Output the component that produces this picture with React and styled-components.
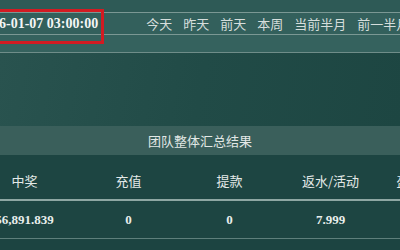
import React from "react";
import styled, { createGlobalStyle } from "styled-components";

const Global = createGlobalStyle`
  html, body { margin: 0; padding: 0; }
  body {
    width: 400px; height: 250px; overflow: hidden;
    background: #1c4441;
    font-family: "Noto Sans CJK SC", "Noto Sans", sans-serif;
  }
`;

const Page = styled.div`
  width: 400px;
  height: 250px;
  overflow: hidden;
  display: flex;
  flex-direction: column;
  background: #1c4441;
`;

const TopBand = styled.div`
  height: 12px;
  background: #2e5a56;
`;

const Rule = styled.div`
  height: ${(p) => p.$h || 1}px;
  background: ${(p) => p.$c || "#7b9894"};
  flex-shrink: 0;
`;

const FilterRow = styled.div`
  height: 21px;
  background: #33605c;
  display: flex;
  align-items: center;
  margin-left: -32px;
  white-space: nowrap;
`;

const DateCell = styled.div`
  position: relative;
  padding: 0 6px 0 10px;
  flex-shrink: 0;
  font-family: "Liberation Serif", serif;
  font-weight: bold;
  font-size: 14px;
  color: #f4f6f5;
`;

const RedMark = styled.div`
  position: absolute;
  top: -7px;
  bottom: -12px;
  left: 0;
  right: 0;
  border: 3px solid #d21b22;
  pointer-events: none;
`;

const NavList = styled.div`
  display: flex;
  gap: 11px;
  margin-left: 42px;
`;

const NavItem = styled.span`
  font-size: 13px;
  color: #d6dedc;
`;

const SubBand = styled.div`
  height: 17px;
  background: #35625e;
`;

const Spacer = styled.div`
  height: 73px;
  background: linear-gradient(100deg, #29534f 0%, #214b47 50%, #1d4642 100%);
`;

const SummaryTitle = styled.div`
  height: 29px;
  background: #3a5f5b;
  display: flex;
  align-items: center;
  justify-content: center;
  font-size: 13px;
  color: #e2e8e6;
`;

const Row = styled.div`
  height: ${(p) => p.$h}px;
  background: #1d4542;
  display: grid;
  grid-template-columns: 107px 101px 101px 101px 101px;
  margin-left: -29px;
  align-items: center;
  padding-top: ${(p) => p.$pt || 0}px;
  box-sizing: border-box;
`;

const HeadCell = styled.div`
  text-align: center;
  font-size: 13px;
  color: #e4eae8;
  white-space: nowrap;
`;

const ValueCell = styled.div`
  text-align: center;
  font-family: "Liberation Serif", serif;
  font-weight: bold;
  font-size: 13px;
  color: #e8eeec;
  white-space: nowrap;
`;

const heads = ["中奖", "充值", "提款", "返水/活动", "盈利/亏损额"];
const values = ["56,891.839", "0", "0", "7.999", "48,892.840"];
const nav = ["今天", "昨天", "前天", "本周", "当前半月", "前一半月"];

export default function App() {
  return (
    <Page>
      <Global />
      <TopBand />
      <Rule />
      <FilterRow>
        <DateCell>
          2026-01-07 03:00:00
          <RedMark />
        </DateCell>
        <NavList>
          {nav.map((n) => (
            <NavItem key={n}>{n}</NavItem>
          ))}
        </NavList>
      </FilterRow>
      <Rule />
      <SubBand />
      <Rule $c="#6f8d89" />
      <Spacer />
      <SummaryTitle>团队整体汇总结果</SummaryTitle>
      <Row $h={44} $pt={6}>
        {heads.map((h) => (
          <HeadCell key={h}>{h}</HeadCell>
        ))}
      </Row>
      <Rule $h={2} $c="#8ea7a3" />
      <Row $h={37}>
        {values.map((v, i) => (
          <ValueCell key={i}>{v}</ValueCell>
        ))}
      </Row>
      <Rule $c="#5e7f7b" />
    </Page>
  );
}
